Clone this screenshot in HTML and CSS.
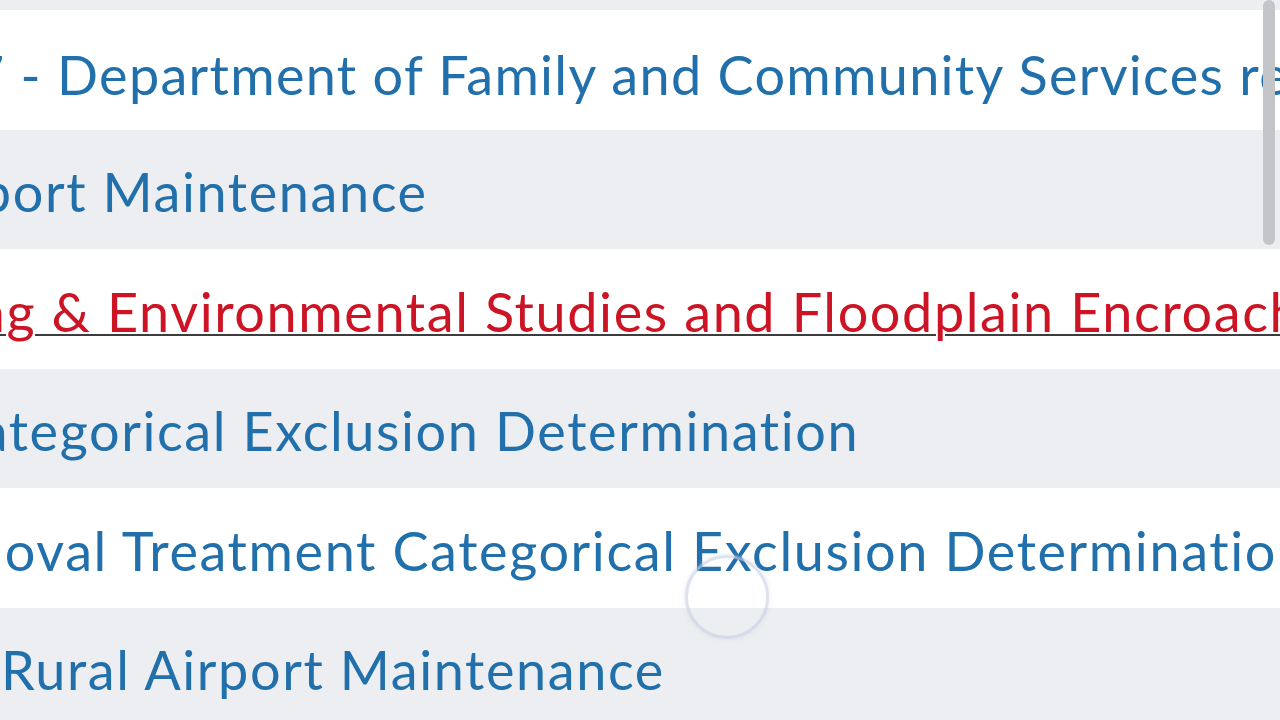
FILE: index.html
```html
<!DOCTYPE html>
<html lang="en">
<head>
    <meta charset="UTF-8">
    <title>Projects</title>
    <link rel="stylesheet" href="styles.css">
</head>
<body>
    <div class="list-wrap">
        <ul class="project-list">
            <li class="row r1"><a href="#">2017 - Department of Family and Community Services request</a></li>
            <li class="row r2"><a href="#">Airport Maintenance</a></li>
            <li class="row r3"><a href="#" class="active">Planning &amp; Environmental Studies and Floodplain Encroachment</a></li>
            <li class="row r4"><a href="#">Categorical Exclusion Determination</a></li>
            <li class="row r5"><a href="#">Removal Treatment Categorical Exclusion Determination</a></li>
            <li class="row r6"><a href="#">Rural Airport Maintenance</a></li>
        </ul>

        <!-- overlay bits -->
        <div class="scroll-thumb"></div>
        <div class="touch-ring"></div>
    </div>
</body>
</html>
```

FILE: styles.css
```css
* {
    margin: 0;
    padding: 0;
    box-sizing: border-box;
}

body {
    font-family: Lato, "Open Sans", sans-serif;
    background-color: #eceef1;
    overflow: hidden;
    height: 720px;
}

.list-wrap {
    position: relative;
    height: 720px;
    padding-top: 10px;
}

.project-list {
    list-style: none;
}

.row {
    height: 119.5px;
    padding-top: 30.5px;
    font-size: 54px;
    line-height: 1.2;
    letter-spacing: 1.6px;
    font-variant-ligatures: none;
    white-space: nowrap;
    overflow: hidden;
}

.row:nth-child(odd) {
    background-color: #ffffff;
}

.row:nth-child(even) {
    background-color: #eceef1;
}

.row a {
    color: #2170ab;
    text-decoration: none;
}

.row a.active {
    color: #cc1424;
    text-decoration: underline;
    text-decoration-color: #3c3c3c;
    text-decoration-thickness: 2px;
    text-underline-offset: 2px;
}

/* rows are cut by the viewport on the left */
.r1 { text-indent: -125px; letter-spacing: 1.3px; padding-top: 33px; }
.r2 { text-indent: -93px; }
.r3 { text-indent: -180px; }
.r4 { text-indent: -57px; }
.r5 { text-indent: -105px; }
.r6 { text-indent: 1px; }

.scroll-thumb {
    position: absolute;
    top: 0;
    right: 5px;
    width: 12px;
    height: 245px;
    background-color: #c3c5c8;
    border-radius: 6px;
}

.touch-ring {
    position: absolute;
    left: 685px;
    top: 555px;
    width: 84px;
    height: 84px;
    border: 3px solid rgba(200, 205, 228, 0.6);
    border-radius: 50%;
    box-shadow: 0 0 4px rgba(200, 205, 228, 0.5);
}
```
